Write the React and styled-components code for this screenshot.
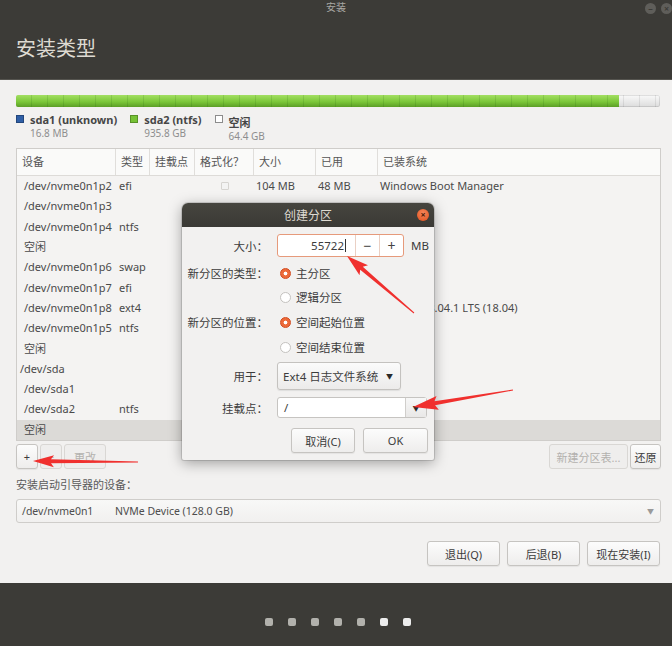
import React from 'react';
import styled, { createGlobalStyle } from 'styled-components';

const GlobalStyle = createGlobalStyle`
  html, body {
    margin: 0;
    padding: 0;
    background: #3c3b37;
  }
  body {
    font-family: "Noto Sans", "Noto Sans CJK SC", sans-serif;
  }
  * {
    box-sizing: border-box;
  }
`;

const Window = styled.div`
  position: relative;
  width: 672px;
  height: 646px;
  display: flex;
  flex-direction: column;
  overflow: hidden;
  font-size: 11px;
  color: #3c3c3c;
`;

const TopBar = styled.header`
  height: 80px;
  flex: none;
  background: #3c3b37;
  display: flex;
  flex-direction: column;
  border-bottom: 1px solid #55544f;
`;

const TitleRow = styled.div`
  height: 15px;
  display: grid;
  grid-template-columns: 1fr auto 1fr;
  align-items: center;
`;

const WinTitle = styled.div`
  grid-column: 2;
  font-size: 10px;
  line-height: 15px;
  color: #a9a8a3;
`;

const WinControls = styled.div`
  grid-column: 3;
  justify-self: end;
  display: flex;
  gap: 5px;
  padding-top: 2px;
`;

const WinBtn = styled.div`
  width: 11px;
  height: 11px;
  border-radius: 50%;
  background: #5f5e5a;
  color: #3c3b37;
  font-size: 9px;
  line-height: 11px;
  text-align: center;
  font-weight: 700;
`;

const Heading = styled.h1`
  margin: 22px 0 0 16px;
  font-size: 20px;
  line-height: 24px;
  font-weight: 400;
  color: #dedad2;
`;

const Content = styled.main`
  flex: 1;
  background: #f2f1f0;
  padding: 15px 11px 0 16px;
  display: flex;
  flex-direction: column;
`;

const PartBar = styled.div`
  height: 12px;
  width: 644px;
  display: flex;
  border-radius: 2px;
  overflow: hidden;
  box-shadow: inset 0 0 0 1px rgba(0, 0, 0, 0.1);
  background:
    repeating-linear-gradient(90deg, transparent 0 15px, rgba(0, 0, 0, 0.08) 15px 16px),
    linear-gradient(#fafafa, #dcdcdc);
`;

const PartFill = styled.div`
  height: 100%;
  background:
    repeating-linear-gradient(90deg, transparent 0 15px, rgba(0, 60, 0, 0.12) 15px 16px),
    linear-gradient(#a3df62, #7cc83a 55%, #5c9f27);
`;

const Legend = styled.div`
  display: flex;
  gap: 13px;
  margin-top: 6px;
  height: 35px;
`;

const LegendItem = styled.div`
  display: flex;
  gap: 6px;
`;

const Swatch = styled.div`
  width: 8px;
  height: 8px;
  margin-top: 2px;
  background: ${(p) => p.$color};
  border: 1px solid ${(p) => (p.$color === '#ffffff' ? '#8c8c8c' : 'rgba(0,0,0,0.25)')};
`;

const LegendText = styled.div`
  display: flex;
  flex-direction: column;
  padding-top: ${(p) => p.$shift || 0}px;
`;

const LegendName = styled.span`
  font-weight: 700;
  line-height: 13px;
  color: #464646;
`;

const LegendSize = styled.span`
  font-size: 10px;
  line-height: 14px;
  color: #8e8e8e;
`;

const columns = '99px 34px 45px 59px 62px 62px 1fr';

const Table = styled.div`
  width: 645px;
  height: 293px;
  border: 1px solid #cfcdca;
  background: #f4f3f2;
  display: flex;
  flex-direction: column;
`;

const HeadRow = styled.div`
  height: 27px;
  flex: none;
  display: grid;
  grid-template-columns: ${columns};
  background: #fafaf9;
  border-bottom: 1px solid #dddbd8;
`;

const HeadCell = styled.div`
  padding-left: 5px;
  line-height: 26px;
  color: #555;
  white-space: nowrap;
  border-right: 1px solid #e0dedb;
  &:last-child {
    border-right: none;
  }
`;

const Row = styled.div`
  height: 20.3px;
  flex: none;
  display: grid;
  grid-template-columns: ${columns};
  align-items: center;
  background: ${(p) => (p.$selected ? '#dcdad7' : 'transparent')};
`;

const Cell = styled.div`
  padding-left: ${(p) => p.$pad ?? 3}px;
  white-space: nowrap;
  overflow: visible;
  color: #4a4a4a;
  line-height: 14px;
  display: flex;
  justify-content: ${(p) => (p.$center ? 'center' : 'flex-start')};
`;

const MiniCheck = styled.span`
  width: 8px;
  height: 8px;
  border: 1px solid #d6d4d1;
  background: #f3f3f3;
  border-radius: 1px;
`;

const ActionRow = styled.div`
  display: flex;
  justify-content: space-between;
  margin-top: 3px;
  width: 645px;
`;

const Group = styled.div`
  display: flex;
  gap: 2px;
`;

const Button = styled.button`
  width: ${(p) => p.$w}px;
  height: 25px;
  padding: 0;
  font-family: inherit;
  font-size: 11px;
  color: ${(p) => (p.disabled ? '#b3b1ae' : '#3c3c3c')};
  border: 1px solid ${(p) => (p.disabled ? '#d9d7d4' : '#c6c4c1')};
  border-radius: 3px;
  background: ${(p) => (p.disabled ? '#efeeed' : 'linear-gradient(#fcfcfc, #eeedec)')};
  box-shadow: ${(p) => (p.disabled ? 'none' : '0 1px 1px rgba(0,0,0,0.06)')};
`;

const BootLabel = styled.div`
  margin-top: 9px;
  line-height: 14px;
  color: #5a5a5a;
`;

const BootSelect = styled.div`
  margin-top: 7px;
  width: 645px;
  height: 24px;
  border: 1px solid #cfcdca;
  border-radius: 3px;
  background: linear-gradient(#f8f8f7, #f1f0ef);
  display: flex;
  align-items: center;
  padding: 0 6px 0 5px;
  color: #4d4d4d;
  font-size: 10.5px;
`;

const DevName = styled.span`
  width: 93px;
`;

const Grow = styled.span`
  flex: 1;
`;

const SmallArrow = styled.span`
  font-size: 7px;
  color: ${(p) => p.$color || '#9a9a9a'};
`;

const Footer = styled.div`
  margin-top: 18px;
  width: 644px;
  display: flex;
  justify-content: flex-end;
  gap: 7px;
`;

const BottomBar = styled.footer`
  height: 63px;
  flex: none;
  background: #3c3b37;
  display: flex;
  justify-content: center;
  gap: 15px;
  padding: 35px 0 0 4px;
`;

const Dot = styled.span`
  width: 8px;
  height: 8px;
  border-radius: 2px;
  background: ${(p) => (p.$bright ? '#ececec' : '#b2b1ac')};
`;

/* dialog over the table */
const Dialog = styled.section`
  position: absolute;
  left: 182px;
  top: 203px;
  width: 252px;
  height: 257px;
  border-radius: 6px 6px 2px 2px;
  background: #f2f1f0;
  box-shadow: 0 3px 14px rgba(0, 0, 0, 0.35), 0 0 0 1px rgba(0, 0, 0, 0.12);
  overflow: hidden;
  display: flex;
  flex-direction: column;
  font-size: 11.5px;
`;

const DialogTitle = styled.div`
  height: 24px;
  flex: none;
  display: grid;
  grid-template-columns: 1fr auto 1fr;
  align-items: center;
  background: linear-gradient(#46453f, #3a3935);
  color: #dfdbd2;
  font-size: 12px;
`;

const DialogTitleText = styled.span`
  grid-column: 2;
`;

const CloseBtn = styled.span`
  grid-column: 3;
  justify-self: end;
  margin-right: 5px;
  width: 12px;
  height: 12px;
  border-radius: 50%;
  background: radial-gradient(circle at 50% 35%, #f7875a, #df4f1c);
  color: #4a1c0a;
  font-size: 9px;
  line-height: 12px;
  text-align: center;
  font-weight: 700;
`;

const DialogBody = styled.div`
  padding: 7px 6px 0 0;
  display: flex;
  flex-direction: column;
`;

const FormRow = styled.div`
  display: grid;
  grid-template-columns: 86px 1fr;
  column-gap: 9px;
  align-items: center;
  height: ${(p) => p.$h}px;
  margin-top: ${(p) => p.$mt || 0}px;
`;

const FormLabel = styled.span`
  text-align: right;
  white-space: nowrap;
  color: #3c3c3c;
`;

const Inline = styled.div`
  display: flex;
  align-items: center;
`;

const SizeField = styled.div`
  width: 127px;
  height: 23px;
  display: flex;
  border: 1px solid #e69a7b;
  border-radius: 3px;
  background: #fff;
`;

const SizeValue = styled.div`
  flex: 1;
  display: flex;
  justify-content: flex-end;
  align-items: center;
  padding-right: 9px;
  color: #3c3c3c;
`;

const Caret = styled.span`
  width: 1px;
  height: 13px;
  margin-left: 1px;
  background: #333;
`;

const SpinBtn = styled.div`
  width: 24px;
  border-left: 1px solid #ead0c4;
  display: flex;
  align-items: center;
  justify-content: center;
  font-size: 14px;
  color: #444;
`;

const Unit = styled.span`
  margin-left: 7px;
`;

const Radio = styled.span`
  width: 11px;
  height: 11px;
  border-radius: 50%;
  margin-left: 3px;
  border: 1px solid ${(p) => (p.$checked ? '#d3491c' : '#c4c2bf')};
  background: ${(p) =>
    p.$checked ? 'radial-gradient(circle, #fff 0 1.6px, #ec6a3a 2.2px)' : '#fff'};
`;

const RadioLabel = styled.span`
  margin-left: 5px;
`;

const Combo = styled.div`
  width: 124px;
  height: 28px;
  border: 1px solid #c4c2bf;
  border-radius: 3px;
  background: linear-gradient(#fbfbfb, #ecebea);
  box-shadow: 0 1px 1px rgba(0, 0, 0, 0.08);
  display: flex;
  align-items: center;
  justify-content: space-between;
  padding: 0 7px 0 5px;
  white-space: nowrap;
`;

const MountField = styled.div`
  width: 150px;
  height: 21px;
  border: 1px solid #c6c4c1;
  border-radius: 3px;
  background: #fff;
  display: flex;
`;

const MountValue = styled.div`
  flex: 1;
  padding-left: 6px;
  line-height: 19px;
`;

const MountArrow = styled.div`
  width: 21px;
  border-left: 1px solid #d0cecb;
  background: linear-gradient(#f7f7f7, #e9e8e7);
  display: flex;
  align-items: center;
  justify-content: center;
`;

const DialogButtons = styled.div`
  display: flex;
  justify-content: flex-end;
  gap: 8px;
  margin-top: 10px;
`;

const Overlay = styled.svg`
  position: absolute;
  left: 0;
  top: 0;
  pointer-events: none;
`;

const rows = [
  { dev: '/dev/nvme0n1p2', type: 'efi', fmt: true, size: '104 MB', used: '48 MB', os: 'Windows Boot Manager' },
  { dev: '/dev/nvme0n1p3' },
  { dev: '/dev/nvme0n1p4', type: 'ntfs' },
  { dev: '空闲' },
  { dev: '/dev/nvme0n1p6', type: 'swap' },
  { dev: '/dev/nvme0n1p7', type: 'efi' },
  { dev: '/dev/nvme0n1p8', type: 'ext4', os: 'Ubuntu 18.04.1 LTS (18.04)' },
  { dev: '/dev/nvme0n1p5', type: 'ntfs' },
  { dev: '空闲' },
  { dev: '/dev/sda', disk: true },
  { dev: '/dev/sda1' },
  { dev: '/dev/sda2', type: 'ntfs' },
  { dev: '空闲', selected: true },
];

const legend = [
  { name: 'sda1 (unknown)', size: '16.8 MB', mb: 16.8, color: '#2f5fa6' },
  { name: 'sda2 (ntfs)', size: '935.8 GB', mb: 935800, color: '#76c234' },
  { name: '空闲', size: '64.4 GB', mb: 64400, color: '#ffffff', shift: 3 },
];

const arrowPoints = ([tx, ty], [px, py], hl, hw, sw = 4, tw = 1) => {
  const len = Math.hypot(px - tx, py - ty);
  const dx = (px - tx) / len;
  const dy = (py - ty) / len;
  const nx = -dy;
  const ny = dx;
  const bx = px - dx * hl;
  const by = py - dy * hl;
  const pts = [
    [tx + (nx * tw) / 2, ty + (ny * tw) / 2],
    [bx + (nx * sw) / 2, by + (ny * sw) / 2],
    [bx + (nx * hw) / 2 - dx * 3, by + (ny * hw) / 2 - dy * 3],
    [px, py],
    [bx - (nx * hw) / 2 - dx * 3, by - (ny * hw) / 2 - dy * 3],
    [bx - (nx * sw) / 2, by - (ny * sw) / 2],
    [tx - (nx * tw) / 2, ty - (ny * tw) / 2],
  ];
  return pts.map((p) => p.map((v) => v.toFixed(1)).join(',')).join(' ');
};

const arrows = [
  { tail: [414, 313], tip: [347, 256], hl: 19, hw: 13 },
  { tail: [513, 390], tip: [413, 407], hl: 22, hw: 14 },
  { tail: [138, 462], tip: [33, 461], hl: 18, hw: 12 },
];

const App = () => {
  const total = legend.reduce((s, l) => s + l.mb, 0);
  const usedPct = ((legend[0].mb + legend[1].mb) / total) * 100;

  return (
    <Window>
      <GlobalStyle />
      <TopBar>
        <TitleRow>
          <WinTitle>安装</WinTitle>
          <WinControls>
            <WinBtn>–</WinBtn>
            <WinBtn>×</WinBtn>
          </WinControls>
        </TitleRow>
        <Heading>安装类型</Heading>
      </TopBar>

      <Content>
        <PartBar>
          <PartFill style={{ width: `${usedPct}%` }} />
        </PartBar>
        <Legend>
          {legend.map((l) => (
            <LegendItem key={l.name}>
              <Swatch $color={l.color} />
              <LegendText $shift={l.shift}>
                <LegendName>{l.name}</LegendName>
                <LegendSize>{l.size}</LegendSize>
              </LegendText>
            </LegendItem>
          ))}
        </Legend>

        <Table>
          <HeadRow>
            <HeadCell>设备</HeadCell>
            <HeadCell>类型</HeadCell>
            <HeadCell>挂载点</HeadCell>
            <HeadCell>格式化？</HeadCell>
            <HeadCell>大小</HeadCell>
            <HeadCell>已用</HeadCell>
            <HeadCell>已装系统</HeadCell>
          </HeadRow>
          {rows.map((r, i) => (
            <Row key={i} $selected={r.selected}>
              <Cell $pad={r.disk ? 3 : 7}>{r.dev}</Cell>
              <Cell>{r.type}</Cell>
              <Cell />
              <Cell $center $pad={0}>{r.fmt && <MiniCheck />}</Cell>
              <Cell $pad={2}>{r.size}</Cell>
              <Cell $pad={2}>{r.used}</Cell>
              <Cell $pad={2}>{r.os}</Cell>
            </Row>
          ))}
        </Table>

        <ActionRow>
          <Group>
            <Button $w={22}>+</Button>
            <Button $w={22} disabled>−</Button>
            <Button $w={42} disabled>更改</Button>
          </Group>
          <Group>
            <Button $w={79} disabled>新建分区表...</Button>
            <Button $w={31}>还原</Button>
          </Group>
        </ActionRow>

        <BootLabel>安装启动引导器的设备：</BootLabel>
        <BootSelect>
          <DevName>/dev/nvme0n1</DevName>
          <Grow>NVMe Device (128.0 GB)</Grow>
          <SmallArrow>▼</SmallArrow>
        </BootSelect>

        <Footer>
          <Button $w={73}>退出(Q)</Button>
          <Button $w={73}>后退(B)</Button>
          <Button $w={73}>现在安装(I)</Button>
        </Footer>
      </Content>

      <BottomBar>
        {[0, 1, 2, 3, 4, 5, 6].map((d) => (
          <Dot key={d} $bright={d >= 5} />
        ))}
      </BottomBar>

      <Dialog>
        <DialogTitle>
          <DialogTitleText>创建分区</DialogTitleText>
          <CloseBtn>×</CloseBtn>
        </DialogTitle>
        <DialogBody>
          <FormRow $h={23}>
            <FormLabel>大小：</FormLabel>
            <Inline>
              <SizeField>
                <SizeValue>
                  55722
                  <Caret />
                </SizeValue>
                <SpinBtn>−</SpinBtn>
                <SpinBtn>+</SpinBtn>
              </SizeField>
              <Unit>MB</Unit>
            </Inline>
          </FormRow>
          <FormRow $h={24} $mt={4}>
            <FormLabel>新分区的类型：</FormLabel>
            <Inline>
              <Radio $checked />
              <RadioLabel>主分区</RadioLabel>
            </Inline>
          </FormRow>
          <FormRow $h={24}>
            <span />
            <Inline>
              <Radio />
              <RadioLabel>逻辑分区</RadioLabel>
            </Inline>
          </FormRow>
          <FormRow $h={24} $mt={1}>
            <FormLabel>新分区的位置：</FormLabel>
            <Inline>
              <Radio $checked />
              <RadioLabel>空间起始位置</RadioLabel>
            </Inline>
          </FormRow>
          <FormRow $h={24} $mt={1}>
            <span />
            <Inline>
              <Radio />
              <RadioLabel>空间结束位置</RadioLabel>
            </Inline>
          </FormRow>
          <FormRow $h={28} $mt={3}>
            <FormLabel>用于：</FormLabel>
            <Inline>
              <Combo>
                Ext4 日志文件系统
                <SmallArrow $color="#2a2a2a">▼</SmallArrow>
              </Combo>
            </Inline>
          </FormRow>
          <FormRow $h={21} $mt={7}>
            <FormLabel>挂载点：</FormLabel>
            <Inline>
              <MountField>
                <MountValue>/</MountValue>
                <MountArrow>
                  <SmallArrow $color="#2a2a2a">▼</SmallArrow>
                </MountArrow>
              </MountField>
            </Inline>
          </FormRow>
          <DialogButtons>
            <Button $w={64}>取消(C)</Button>
            <Button $w={65}>OK</Button>
          </DialogButtons>
        </DialogBody>
      </Dialog>

      <Overlay width="672" height="646" viewBox="0 0 672 646">
        {arrows.map((a, i) => (
          <polygon key={i} points={arrowPoints(a.tail, a.tip, a.hl, a.hw)} fill="#f0302e" />
        ))}
      </Overlay>
    </Window>
  );
};

export default App;
